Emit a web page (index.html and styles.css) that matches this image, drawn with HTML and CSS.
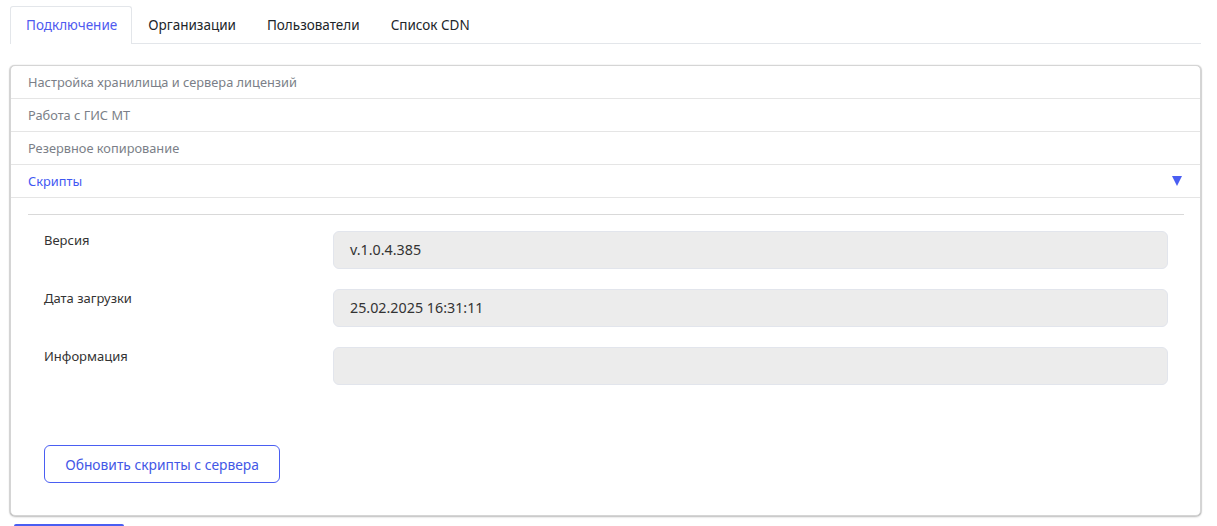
FILE: index.html
```html
<!DOCTYPE html>
<html lang="ru">
<head>
<meta charset="utf-8">
<link rel="stylesheet" href="styles.css">
</head>
<body>
<div class="page">
  <nav class="tabs">
    <a class="tab active">Подключение</a>
    <a class="tab">Организации</a>
    <a class="tab">Пользователи</a>
    <a class="tab">Список CDN</a>
  </nav>
  <div class="card">
    <div class="acc-row">Настройка хранилища и сервера лицензий</div>
    <div class="acc-row">Работа с ГИС МТ</div>
    <div class="acc-row">Резервное копирование</div>
    <div class="acc-row open"><span>Скрипты</span><span class="caret"></span></div>
    <div class="acc-body">
      <div class="divider"></div>
      <div class="fields">
        <div class="field"><div class="label">Версия</div><div class="input">v.1.0.4.385</div></div>
        <div class="field"><div class="label">Дата загрузки</div><div class="input">25.02.2025 16:31:11</div></div>
        <div class="field"><div class="label">Информация</div><div class="input"></div></div>
      </div>
      <button class="btn-outline">Обновить скрипты с сервера</button>
    </div>
  </div>
  <div class="next-btn"></div>
</div>
</body>
</html>
```
FILE: styles.css
```css
* { box-sizing: border-box; }
body {
  margin: 0;
  font-family: "Noto Sans", "Open Sans", sans-serif;
  color: #212529;
  background: #fff;
}
.page { padding: 6px 16px 0 10px; }
.tabs {
  display: flex;
  border-bottom: 1px solid #e3e6ea;
  height: 38px;
}
.tab {
  display: flex;
  align-items: center;
  padding: 0 14px 2px 15px;
  font-size: 13.5px;
  color: #212529;
  border: 1px solid transparent;
  border-bottom: none;
  border-radius: 3px 3px 0 0;
  margin-bottom: -1px;
}
.tab.active {
  color: #4f5bf0;
  border-color: #e3e6ea;
  background: #fff;
  height: 38px;
}
.card {
  margin-top: 21px;
  border: 1px solid #d5d5d5;
  border-radius: 5px;
  box-shadow: 0 1px 2px rgba(0,0,0,0.25), -1px 0 1px rgba(0,0,0,0.12), 1px 0 1px rgba(0,0,0,0.12);
  background: #fff;
  height: 451px;
}
.acc-row {
  height: 33px;
  display: flex;
  align-items: center;
  justify-content: space-between;
  padding: 0 18px 1px 17px;
  border-bottom: 1px solid #e5e5e5;
  font-size: 12.8px;
  color: #7b7f88;
}
.acc-row.open { color: #3f57f2; }
.caret {
  width: 0; height: 0;
  border-left: 5px solid transparent;
  border-right: 5px solid transparent;
  border-top: 10px solid #4a5ef2;
  margin-top: 1px;
}
.acc-body { padding: 16px 16px 0 17px; }
.divider { border-top: 1px solid #d9d9d9; }
.fields {
  display: flex;
  flex-direction: column;
  gap: 20px;
  padding: 16px 16px 0 16px;
}
.field { display: flex; }
.label {
  width: 289px;
  font-size: 13px;
  color: #333;
  padding-top: 0;
  line-height: 18px;
}
.input {
  flex: 1;
  height: 38px;
  background: #ececec;
  border: 1px solid #e2e5ec;
  border-radius: 6px;
  padding: 9px 16px;
  font-size: 14.3px;
  color: #333;
  line-height: 18px;
}
.btn-outline {
  margin: 60px 0 0 16px;
  height: 38px;
  width: 236px;
  border: 1px solid #4a5ef2;
  border-radius: 6px;
  background: #fff;
  color: #4357e6;
  font-family: inherit;
  font-size: 13.8px;
  display: block;
}
.next-btn {
  margin: 8px 0 0 4px;
  width: 110px;
  height: 2px;
  border-top: 2px solid #4a5ef2;
  border-radius: 6px 6px 0 0;
}
```
